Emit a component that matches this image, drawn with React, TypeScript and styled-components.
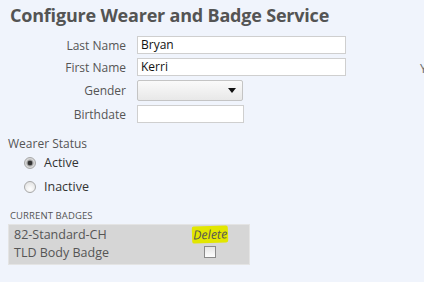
import styled, { createGlobalStyle } from 'styled-components';

const GlobalStyle = createGlobalStyle`
  html, body {
    margin: 0;
    background: #f0f4fc;
  }
  body {
    font-family: 'Open Sans', 'Noto Sans', sans-serif;
    color: #555;
    overflow: hidden;
  }
`;

const fields = [
  { label: 'Last Name', value: 'Bryan', kind: 'text', width: 209 },
  { label: 'First Name', value: 'Kerri', kind: 'text', width: 209 },
  { label: 'Gender', value: '', kind: 'select', width: 106 },
  { label: 'Birthdate', value: '', kind: 'text', width: 107 },
];

const badges = [
  { name: '82-Standard-CH', action: 'delete' },
  { name: 'TLD Body Badge', action: 'check' },
];

const App = () => {
  return (
    <Page>
      <GlobalStyle />
      <Title>Configure Wearer and Badge Service</Title>
      <FormGrid>
        {fields.map(field => (
          <FieldRow key={field.label}>
            <Label>{field.label}</Label>
            {field.kind === 'select' ? (
              <Select $width={field.width}>
                <Caret />
              </Select>
            ) : (
              <Input $width={field.width}>{field.value}</Input>
            )}
          </FieldRow>
        ))}
      </FormGrid>
      <Cutoff>Y</Cutoff>

      <StatusTitle>Wearer Status</StatusTitle>
      <RadioList>
        <RadioRow>
          <Radio $checked />
          <RadioText>Active</RadioText>
        </RadioRow>
        <RadioRow>
          <Radio />
          <RadioText>Inactive</RadioText>
        </RadioRow>
      </RadioList>

      <SectionTitle>CURRENT BADGES</SectionTitle>
      <BadgeTable>
        {badges.map(badge => (
          <BadgeRow key={badge.name}>
            <BadgeName>{badge.name}</BadgeName>
            <BadgeAction>
              {badge.action === 'delete' ? (
                <DeleteLink>Delete</DeleteLink>
              ) : (
                <CheckBox />
              )}
            </BadgeAction>
          </BadgeRow>
        ))}
      </BadgeTable>
    </Page>
  );
};

const Page = styled.div`
  position: relative;
  width: 424px;
  height: 282px;
  padding: 1px 0 0 8px;
  box-sizing: border-box;
`;

const Title = styled.h1`
  margin: 0 0 0 2px;
  font-size: 18px;
  font-weight: 700;
  line-height: 28px;
  color: #545454;
  letter-spacing: -0.2px;
`;

const FormGrid = styled.div`
  display: flex;
  flex-direction: column;
  gap: 4px;
  margin-top: 7px;
`;

const FieldRow = styled.div`
  display: flex;
  align-items: center;
  gap: 11px;
  min-height: 18px;
`;

const Label = styled.div`
  width: 118px;
  text-align: right;
  font-size: 12px;
  color: #555;
`;

const Input = styled.div<{ $width: number }>`
  width: ${props => props.$width}px;
  height: 18px;
  box-sizing: border-box;
  background: #fff;
  border: 1px solid #cfcfcf;
  padding: 0 3px;
  font-size: 12px;
  line-height: 16px;
  color: #111;
`;

const Select = styled.div<{ $width: number }>`
  position: relative;
  width: ${props => props.$width}px;
  height: 21px;
  box-sizing: border-box;
  border: 1px solid #c4c4c4;
  border-radius: 2px;
  background: linear-gradient(#fafafa, #e8e8e8);
`;

const Caret = styled.span`
  position: absolute;
  right: 6px;
  top: 7px;
  border-left: 4px solid transparent;
  border-right: 4px solid transparent;
  border-top: 5px solid #111;
`;

const Cutoff = styled.span`
  position: absolute;
  left: 420px;
  top: 60px;
  font-size: 12px;
  color: #666;
`;

const StatusTitle = styled.div`
  margin-top: 12px;
  font-size: 12px;
  color: #555;
`;

const RadioList = styled.div`
  display: flex;
  flex-direction: column;
  gap: 7px;
  margin: 2px 0 0 16px;
`;

const RadioRow = styled.label`
  display: flex;
  align-items: center;
  gap: 8px;
  height: 17px;
`;

const Radio = styled.span<{ $checked?: boolean }>`
  width: 12px;
  height: 12px;
  border-radius: 50%;
  box-sizing: border-box;
  border: 1px solid #a8a8a8;
  background: ${props =>
    props.$checked
      ? 'radial-gradient(circle, #333 0 2px, #888 2.5px, #d8d8d8 4px)'
      : 'radial-gradient(circle at 50% 70%, #fff, #dcdcdc)'};
`;

const RadioText = styled.span`
  font-size: 12.5px;
  color: #333;
`;

const SectionTitle = styled.div`
  margin: 14px 0 0 2px;
  font-size: 9.5px;
  letter-spacing: 0.1px;
  color: #555;
`;

const BadgeTable = styled.div`
  width: 242px;
  margin-top: 2px;
  padding: 0 0 3px;
  background: #d6d6d6;
  border: 1px solid #e4e4e4;
  box-sizing: border-box;
`;

const BadgeRow = styled.div`
  display: flex;
  align-items: center;
  height: 18px;
  padding-left: 5px;
`;

const BadgeName = styled.div`
  width: 171px;
  font-size: 12.5px;
  color: #555;
`;

const BadgeAction = styled.div`
  width: 50px;
  display: flex;
  justify-content: center;
`;

const DeleteLink = styled.span`
  font-size: 12.5px;
  font-style: italic;
  color: #555;
  background: #e2e600;
  padding: 0 1px;
  border-radius: 2px;
  transform: rotate(-2deg);
`;

const CheckBox = styled.span`
  width: 12px;
  height: 12px;
  box-sizing: border-box;
  border: 1px solid #8a8a8a;
  background: linear-gradient(#e6e6e6, #fdfdfd);
`;

export default App;
